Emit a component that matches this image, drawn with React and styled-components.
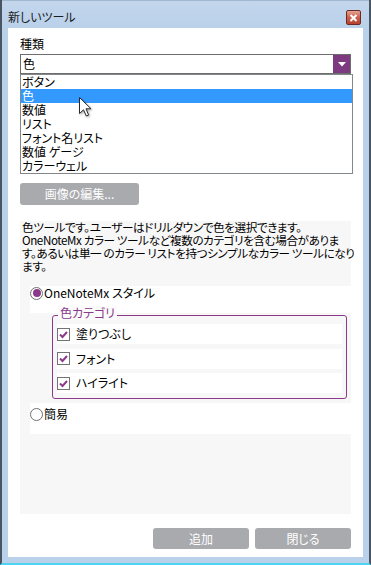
import React from "react";
import styled, { createGlobalStyle } from "styled-components";

const Global = createGlobalStyle`
  html, body { margin: 0; padding: 0; background: #b9d1ea; }
  body {
    font-family: "Noto Sans CJK JP", "Noto Sans", sans-serif;
    font-size: 12px;
    color: #000;
    font-feature-settings: "palt" 1;
  }
  * { box-sizing: border-box; }
`;

const Window = styled.div`
  width: 371px;
  height: 565px;
  background: #b9d1ea;
  border-left: 2px solid #4a5563;
  border-right: 2px solid #4a5563;
  border-bottom: 2px solid #4fd3f3;
  display: flex;
  flex-direction: column;
`;

const TitleBar = styled.div`
  height: 28px;
  flex: none;
  display: flex;
  align-items: flex-start;
  padding: 9px 8px 0 6px;
  background: linear-gradient(#c3d6ec, #b9d1ea);
  border-top: 1px solid #9fb8d2;
`;

const Title = styled.div`
  font-size: 12px;
  line-height: 14px;
  color: #1b1b1b;
`;

const CloseBtn = styled.div`
  margin-left: auto;
  width: 15px;
  height: 15px;
  border: 1px solid #6b2b24;
  border-radius: 2px;
  background: linear-gradient(#e2a596 0%, #cf6450 45%, #b8402d 100%);
  display: flex;
  align-items: center;
  justify-content: center;
`;

const Client = styled.div`
  position: relative;
  flex: 1;
  margin: 0 6px 6px;
  background: #fff;
  padding: 9px 12px 0;
  display: flex;
  flex-direction: column;
`;

const Label = styled.div`
  line-height: 14px;
  height: 14px;
`;

const Select = styled.div`
  margin-top: 3px;
  height: 20px;
  border: 1px solid #6d6d6d;
  display: flex;
  align-items: stretch;
`;

const SelectValue = styled.div`
  flex: 1;
  padding-left: 2px;
  line-height: 18px;
`;

const SelectArrow = styled.div`
  width: 17px;
  background: #7e3a7f;
  display: flex;
  align-items: center;
  justify-content: center;
`;

const List = styled.div`
  width: 333px;
  height: 100px;
  border: 1px solid #82878c;
  display: flex;
  flex-direction: column;
`;

const ListItem = styled.div`
  height: 14px;
  line-height: 14px;
  padding-left: 1px;
  white-space: nowrap;
  background: ${(p) => (p.$selected ? "#3399ff" : "transparent")};
  color: ${(p) => (p.$selected ? "#fff" : "#000")};
`;

const GrayButton = styled.div`
  width: ${(p) => p.$w}px;
  height: ${(p) => p.$h}px;
  background: #a9aaae;
  border-radius: 3px;
  color: #fff;
  display: flex;
  align-items: center;
  justify-content: center;
  line-height: 14px;
  flex: none;
`;

const EditButton = styled(GrayButton)`
  margin-top: 9px;
`;

const Panel = styled.div`
  margin-top: 16px;
  height: 293px;
  background: #f7f7f7;
  display: flex;
  flex-direction: column;
`;

const Description = styled.div`
  padding-left: 2px;
  font-size: 11.6px;
  line-height: 13px;
  letter-spacing: -0.4px;
  white-space: nowrap;
`;

const Options = styled.div`
  margin: 13px 0 0 10px;
  display: flex;
  flex-direction: column;
`;

const RadioRow = styled.div`
  background: #fff;
  height: ${(p) => p.$h}px;
  margin-top: ${(p) => p.$mt || 0}px;
  padding-top: ${(p) => p.$pt || 0}px;
`;

const RadioLine = styled.div`
  display: flex;
  align-items: center;
  height: 14px;
  line-height: 14px;
  gap: 1px;
`;

const Radio = styled.div`
  width: 13px;
  height: 13px;
  border-radius: 50%;
  border: 1px solid #6f6f6f;
  background: #fff;
  display: flex;
  align-items: center;
  justify-content: center;
  flex: none;
  &::after {
    content: "";
    width: 8px;
    height: 8px;
    border-radius: 50%;
    background: ${(p) => (p.$checked ? "#8b3a8b" : "transparent")};
  }
`;

const GroupBox = styled.div`
  position: relative;
  margin: 2px 4px 0 22px;
  border: 1px solid #8b3a8b;
  border-radius: 3px;
  padding: 8px 4px 5px;
  display: flex;
  flex-direction: column;
  gap: 4.5px;
`;

const Legend = styled.div`
  position: absolute;
  top: -10px;
  left: 5px;
  padding: 0 2px;
  background: #fbfbfb;
  color: #8b3a8b;
  line-height: 14px;
`;

const CheckRow = styled.div`
  height: 20px;
  background: #fff;
  display: flex;
  align-items: center;
  gap: 6px;
  line-height: 14px;
`;

const CheckBox = styled.div`
  width: 13px;
  height: 13px;
  border: 1px solid #737373;
  background: #fff;
  display: flex;
  align-items: center;
  justify-content: center;
  flex: none;
`;

const ButtonRow = styled.div`
  margin-top: 14px;
  display: flex;
  justify-content: flex-end;
  gap: 6px;
`;

const Cursor = styled.svg`
  position: absolute;
  left: 71px;
  top: 69px;
  filter: drop-shadow(1px 1px 1px rgba(0, 0, 0, 0.35));
`;

const items = ["ボタン", "色", "数値", "リスト", "フォント名リスト", "数値 ゲージ", "カラーウェル"];
const checks = ["塗りつぶし", "フォント", "ハイライト"];

const Check = () => (
  <CheckBox>
    <svg width="11" height="11" viewBox="0 0 11 11">
      <path d="M2 5.5 L4.5 8 L9 3" fill="none" stroke="#8b3a8b" strokeWidth="2" />
    </svg>
  </CheckBox>
);

export default function App() {
  return (
    <>
      <Global />
      <Window>
        <TitleBar>
          <Title>新しいツール</Title>
          <CloseBtn>
            <svg width="9" height="8" viewBox="0 0 9 8">
              <path d="M1.5 1 L7.5 7 M7.5 1 L1.5 7" stroke="#fff" strokeWidth="2" />
            </svg>
          </CloseBtn>
        </TitleBar>
        <Client>
          <Label>種類</Label>
          <Select>
            <SelectValue>色</SelectValue>
            <SelectArrow>
              <svg width="8" height="5" viewBox="0 0 8 5">
                <path d="M0 0 H8 L4 4.5 Z" fill="#fff" />
              </svg>
            </SelectArrow>
          </Select>
          <List>
            {items.map((t, i) => (
              <ListItem key={i} $selected={i === 1}>
                {t}
              </ListItem>
            ))}
          </List>
          <EditButton $w={119} $h={22}>画像の編集...</EditButton>
          <Panel>
            <Description>
              色ツールです。ユーザーはドリルダウンで色を選択できます。
              <br />
              OneNoteMx カラー ツールなど複数のカテゴリを含む場合がありま
              <br />
              す。あるいは単一 のカラー リストを持つシンプルなカラー ツールになり
              <br />
              ます。
            </Description>
            <Options>
              <RadioRow $h={27}>
                <RadioLine>
                  <Radio $checked />
                  <span>OneNoteMx スタイル</span>
                </RadioLine>
              </RadioRow>
              <GroupBox>
                <Legend>色カテゴリ</Legend>
                {checks.map((c) => (
                  <CheckRow key={c}>
                    <Check />
                    <span>{c}</span>
                  </CheckRow>
                ))}
              </GroupBox>
              <RadioRow $h={31} $mt={4} $pt={4}>
                <RadioLine>
                  <Radio />
                  <span>簡易</span>
                </RadioLine>
              </RadioRow>
            </Options>
          </Panel>
          <ButtonRow>
            <GrayButton $w={96} $h={21}>追加</GrayButton>
            <GrayButton $w={96} $h={21}>閉じる</GrayButton>
          </ButtonRow>
          <Cursor width="14" height="21" viewBox="0 0 14 21">
            <path
              d="M0.5 0.5 L0.5 16.5 L4.5 12.8 L7.3 19 L9.6 18 L7 11.8 L12 11.8 Z"
              fill="#fff"
              stroke="#2a2a2a"
              strokeWidth="1"
              strokeLinejoin="round"
            />
          </Cursor>
        </Client>
      </Window>
    </>
  );
}
